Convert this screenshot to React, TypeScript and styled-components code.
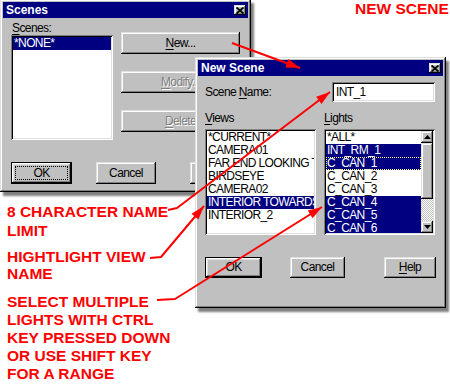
import React from "react";
import styled, { createGlobalStyle, css } from "styled-components";

const FONT = `"Liberation Sans", Arial, sans-serif`;

const GlobalStyle = createGlobalStyle`
  html, body { margin: 0; padding: 0; background: #ffffff; }
  body { font-family: ${FONT}; font-size: 12px; }
`;

const raised = css`
  box-shadow: inset -1px -1px #000000, inset 1px 1px #dfdfdf, inset -2px -2px #808080,
    inset 2px 2px #ffffff;
`;
const sunken = css`
  box-shadow: inset 1px 1px #808080, inset -1px -1px #ffffff, inset 2px 2px #000000,
    inset -2px -2px #dfdfdf;
`;
const uiText = css`
  font: 12px/13px ${FONT};
  letter-spacing: -0.6px;
`;

const Desktop = styled.div`
  position: relative;
  width: 450px;
  height: 384px;
  overflow: hidden;
  background: #ffffff;
  font-family: ${FONT};
`;

const Window = styled.section<{ $x: number; $y: number; $w: number; $h: number; $z: number }>`
  position: absolute;
  left: ${(p) => p.$x}px;
  top: ${(p) => p.$y}px;
  width: ${(p) => p.$w}px;
  height: ${(p) => p.$h}px;
  z-index: ${(p) => p.$z};
  box-sizing: border-box;
  padding: 3px;
  background: #c0c0c0;
  box-shadow: inset -1px -1px #000000, inset 1px 1px #dfdfdf, inset -2px -2px #808080,
    inset 2px 2px #ffffff, 3px 4px 2px rgba(0, 0, 0, 0.5);
  display: flex;
  flex-direction: column;
`;

const TitleBar = styled.header`
  flex: none;
  height: 16px;
  background: #000080;
  color: #ffffff;
  display: flex;
  align-items: center;
  justify-content: space-between;
  padding: 0 2px 0 3px;
  font: bold 12px/16px ${FONT};
`;

const CloseButton = styled.span`
  width: 12px;
  height: 10px;
  background: #c0c0c0;
  ${raised};
  display: flex;
  align-items: center;
  justify-content: center;
`;

const ScenesBody = styled.div`
  flex: 1;
  display: flex;
  flex-direction: column;
  padding: 4px 0 0 8px;
`;

const TopRow = styled.div`
  display: flex;
  gap: 8px;
`;

const Field = styled.div`
  display: flex;
  flex-direction: column;
`;

const FieldLabel = styled.div`
  ${uiText};
  color: #000000;
  padding-left: 1px;
  u {
    text-underline-offset: 2px;
  }
`;

const ListLabel = styled(FieldLabel)`
  padding-left: 0;
  margin-bottom: 4px;
`;

const ButtonColumn = styled.div`
  display: flex;
  flex-direction: column;
  gap: 17px;
  margin-top: 10px;
`;

const ButtonRow = styled.div<{ $mt: number }>`
  display: flex;
  margin-top: ${(p) => p.$mt}px;
`;

const Button = styled.div<{ $w: number; $h?: number; $ml?: number; $default?: boolean; $disabled?: boolean }>`
  box-sizing: border-box;
  width: ${(p) => p.$w}px;
  height: ${(p) => p.$h ?? 21}px;
  margin-left: ${(p) => p.$ml ?? 0}px;
  flex: none;
  background: #c0c0c0;
  ${raised};
  ${(p) =>
    p.$default &&
    css`
      box-shadow: inset 0 0 0 1px #000000, inset -2px -2px #000000, inset 2px 2px #ffffff,
        inset -3px -3px #808080, inset 3px 3px #dfdfdf;
    `}
  display: flex;
  align-items: center;
  justify-content: center;
  padding: 4px;
  ${uiText};
  color: ${(p) => (p.$disabled ? "#808080" : "#000000")};
  text-shadow: ${(p) => (p.$disabled ? "1px 1px 0 #ffffff" : "none")};
  u {
    text-decoration-thickness: 1px;
    text-underline-offset: 2px;
  }
`;

const FocusRing = styled.span`
  flex: 1;
  align-self: stretch;
  display: flex;
  align-items: center;
  justify-content: center;
  border: 1px dotted #000000;
`;

const ListBox = styled.div<{ $w: number; $h: number }>`
  box-sizing: border-box;
  width: ${(p) => p.$w}px;
  height: ${(p) => p.$h}px;
  background: #ffffff;
  ${sunken};
  padding: 2px;
  display: flex;
  overflow: hidden;
`;

const Items = styled.div`
  flex: 1;
  min-width: 0;
  overflow: hidden;
`;

const Item = styled.div<{ $sel?: boolean; $focus?: boolean }>`
  height: 13px;
  ${uiText};
  padding-left: 1px;
  white-space: nowrap;
  overflow: hidden;
  background: ${(p) => (p.$sel ? "#000080" : "transparent")};
  color: ${(p) => (p.$sel ? "#ffffff" : "#000000")};
  ${(p) =>
    p.$focus &&
    css`
      outline: 1px dotted #ffff80;
      outline-offset: -1px;
    `}
`;

const ScrollBar = styled.div`
  width: 12px;
  flex: none;
  display: flex;
  flex-direction: column;
`;

const ScrollButton = styled.div`
  height: 12px;
  flex: none;
  background: #c0c0c0;
  ${raised};
  display: flex;
  align-items: center;
  justify-content: center;
`;

const Thumb = styled.div`
  height: 56px;
  flex: none;
  background: #c0c0c0;
  ${raised};
`;

const Track = styled.div`
  flex: 1;
  background: repeating-conic-gradient(#ffffff 0 25%, #c0c0c0 0 50%) 0 0 / 2px 2px;
`;

const NewBody = styled.div`
  flex: 1;
  display: flex;
  flex-direction: column;
  padding: 6px 8px 0 7px;
`;

const NameRow = styled.div`
  display: flex;
  align-items: center;
  justify-content: space-between;
  height: 20px;
`;

const TextInput = styled.div`
  box-sizing: border-box;
  width: 103px;
  height: 20px;
  background: #ffffff;
  ${sunken};
  padding: 3px 4px;
  ${uiText};
  line-height: 14px;
  color: #000000;
`;

const ListsRow = styled.div`
  display: flex;
  justify-content: space-between;
  margin-top: 10px;
`;

const Note = styled.div<{ $x: number; $y: number; $lh: number }>`
  position: absolute;
  left: ${(p) => p.$x}px;
  top: ${(p) => p.$y}px;
  z-index: 4;
  color: #ff0000;
  font: bold 15.5px/${(p) => p.$lh}px ${FONT};
  white-space: pre;
`;

const Overlay = styled.svg`
  position: absolute;
  left: 0;
  top: 0;
  z-index: 5;
  pointer-events: none;
`;

type Pt = [number, number];

function headPoints(from: Pt, tip: Pt, len = 14, half = 4.5): string {
  const dx = tip[0] - from[0];
  const dy = tip[1] - from[1];
  const l = Math.hypot(dx, dy);
  const ux = dx / l;
  const uy = dy / l;
  const bx = tip[0] - ux * len;
  const by = tip[1] - uy * len;
  const px = -uy;
  const py = ux;
  return `${tip[0]},${tip[1]} ${bx + px * half},${by + py * half} ${bx - px * half},${by - py * half}`;
}

const arrows: Pt[][] = [
  [
    [232, 43],
    [300, 68],
  ],
  [
    [168, 210],
    [177, 208],
    [330, 92],
  ],
  [
    [150, 258],
    [161, 257],
    [204, 206],
  ],
  [
    [157, 300],
    [175, 299],
    [322, 207],
  ],
];

const CloseIcon = () => (
  <svg width="8" height="7" viewBox="0 0 8 7">
    <path d="M0.5 0.5 L7.5 6.5 M7.5 0.5 L0.5 6.5" stroke="#000" strokeWidth="1.8" />
  </svg>
);

const UpIcon = () => (
  <svg width="7" height="4" viewBox="0 0 7 4">
    <path d="M3.5 0 L7 4 L0 4 Z" fill="#000" />
  </svg>
);

const DownIcon = () => (
  <svg width="7" height="4" viewBox="0 0 7 4">
    <path d="M0 0 L7 0 L3.5 4 Z" fill="#000" />
  </svg>
);

const views = [
  "*CURRENT*",
  "CAMERA01",
  "FAR END LOOKING TOWARDS DOOR",
  "BIRDSEYE",
  "CAMERA02",
  "INTERIOR TOWARDS DOOR",
  "INTERIOR_2",
];

const lights: { name: string; sel?: boolean; focus?: boolean }[] = [
  { name: "*ALL*" },
  { name: "INT_RM_1", sel: true },
  { name: "C_CAN_1", sel: true, focus: true },
  { name: "C_CAN_2" },
  { name: "C_CAN_3" },
  { name: "C_CAN_4", sel: true },
  { name: "C_CAN_5", sel: true },
  { name: "C_CAN_6", sel: true },
];

export default function App() {
  return (
    <Desktop>
      <GlobalStyle />

      <Window $x={0} $y={-1} $w={251} $h={193} $z={1}>
        <TitleBar>
          <span>Scenes</span>
          <CloseButton>
            <CloseIcon />
          </CloseButton>
        </TitleBar>
        <ScenesBody>
          <TopRow>
            <Field>
              <FieldLabel>
                <u>S</u>cenes:
              </FieldLabel>
              <ListBox $w={102} $h={105}>
                <Items>
                  <Item $sel>*NONE*</Item>
                </Items>
              </ListBox>
            </Field>
            <ButtonColumn>
              <Button $w={119} $h={22}>
                <span>
                  <u>N</u>ew...
                </span>
              </Button>
              <Button $w={119} $h={22} $disabled>
                <span>
                  <u>M</u>odify...
                </span>
              </Button>
              <Button $w={119} $h={22} $disabled>
                <span>
                  <u>D</u>elete
                </span>
              </Button>
            </ButtonColumn>
          </TopRow>
          <ButtonRow $mt={22}>
            <Button $w={61} $h={22} $default>
              <FocusRing>OK</FocusRing>
            </Button>
            <Button $w={60} $h={22} $ml={24}>
              Cancel
            </Button>
            <Button $w={60} $h={22} $ml={34}>
              <span>
                <u>H</u>elp
              </span>
            </Button>
          </ButtonRow>
        </ScenesBody>
      </Window>

      <Window $x={195} $y={57} $w={251} $h={251} $z={2}>
        <TitleBar>
          <span>New Scene</span>
          <CloseButton>
            <CloseIcon />
          </CloseButton>
        </TitleBar>
        <NewBody>
          <NameRow>
            <FieldLabel style={{ paddingLeft: 0 }}>
              Scene <u>N</u>ame:
            </FieldLabel>
            <TextInput>INT_1</TextInput>
          </NameRow>
          <ListsRow>
            <Field>
              <ListLabel>
                <u>V</u>iews
              </ListLabel>
              <ListBox $w={111} $h={106}>
                <Items>
                  {views.map((v, i) => (
                    <Item key={v} $sel={i === 5}>
                      {v}
                    </Item>
                  ))}
                </Items>
              </ListBox>
            </Field>
            <Field>
              <ListLabel>
                <u>L</u>ights
              </ListLabel>
              <ListBox $w={111} $h={106}>
                <Items>
                  {lights.map((l) => (
                    <Item key={l.name} $sel={l.sel} $focus={l.focus}>
                      {l.name}
                    </Item>
                  ))}
                </Items>
                <ScrollBar>
                  <ScrollButton>
                    <UpIcon />
                  </ScrollButton>
                  <Thumb />
                  <Track />
                  <ScrollButton>
                    <DownIcon />
                  </ScrollButton>
                </ScrollBar>
              </ListBox>
            </Field>
          </ListsRow>
          <ButtonRow $mt={22}>
            <Button $w={57} $default>
              OK
            </Button>
            <Button $w={55} $ml={28}>
              Cancel
            </Button>
            <Button $w={52} $ml={39}>
              <span>
                <u>H</u>elp
              </span>
            </Button>
          </ButtonRow>
        </NewBody>
      </Window>

      <Note $x={355} $y={-1} $lh={19}>
        NEW SCENE
      </Note>
      <Note $x={7} $y={202} $lh={19}>
        {"8 CHARACTER NAME\nLIMIT"}
      </Note>
      <Note $x={7} $y={248} $lh={17}>
        {"HIGHTLIGHT VIEW\nNAME"}
      </Note>
      <Note $x={7} $y={293} $lh={18}>
        {"SELECT MULTIPLE\nLIGHTS WITH CTRL\nKEY PRESSED DOWN\nOR USE SHIFT KEY\nFOR A RANGE"}
      </Note>

      <Overlay width={450} height={384} viewBox="0 0 450 384">
        {arrows.map((pts, i) => {
          const tip = pts[pts.length - 1];
          const prev = pts[pts.length - 2];
          return (
            <g key={i}>
              <polyline
                points={pts.map((p) => p.join(",")).join(" ")}
                fill="none"
                stroke="#ff0000"
                strokeWidth={2}
                strokeLinejoin="round"
              />
              <polygon points={headPoints(prev, tip)} fill="#ff0000" />
            </g>
          );
        })}
      </Overlay>
    </Desktop>
  );
}
